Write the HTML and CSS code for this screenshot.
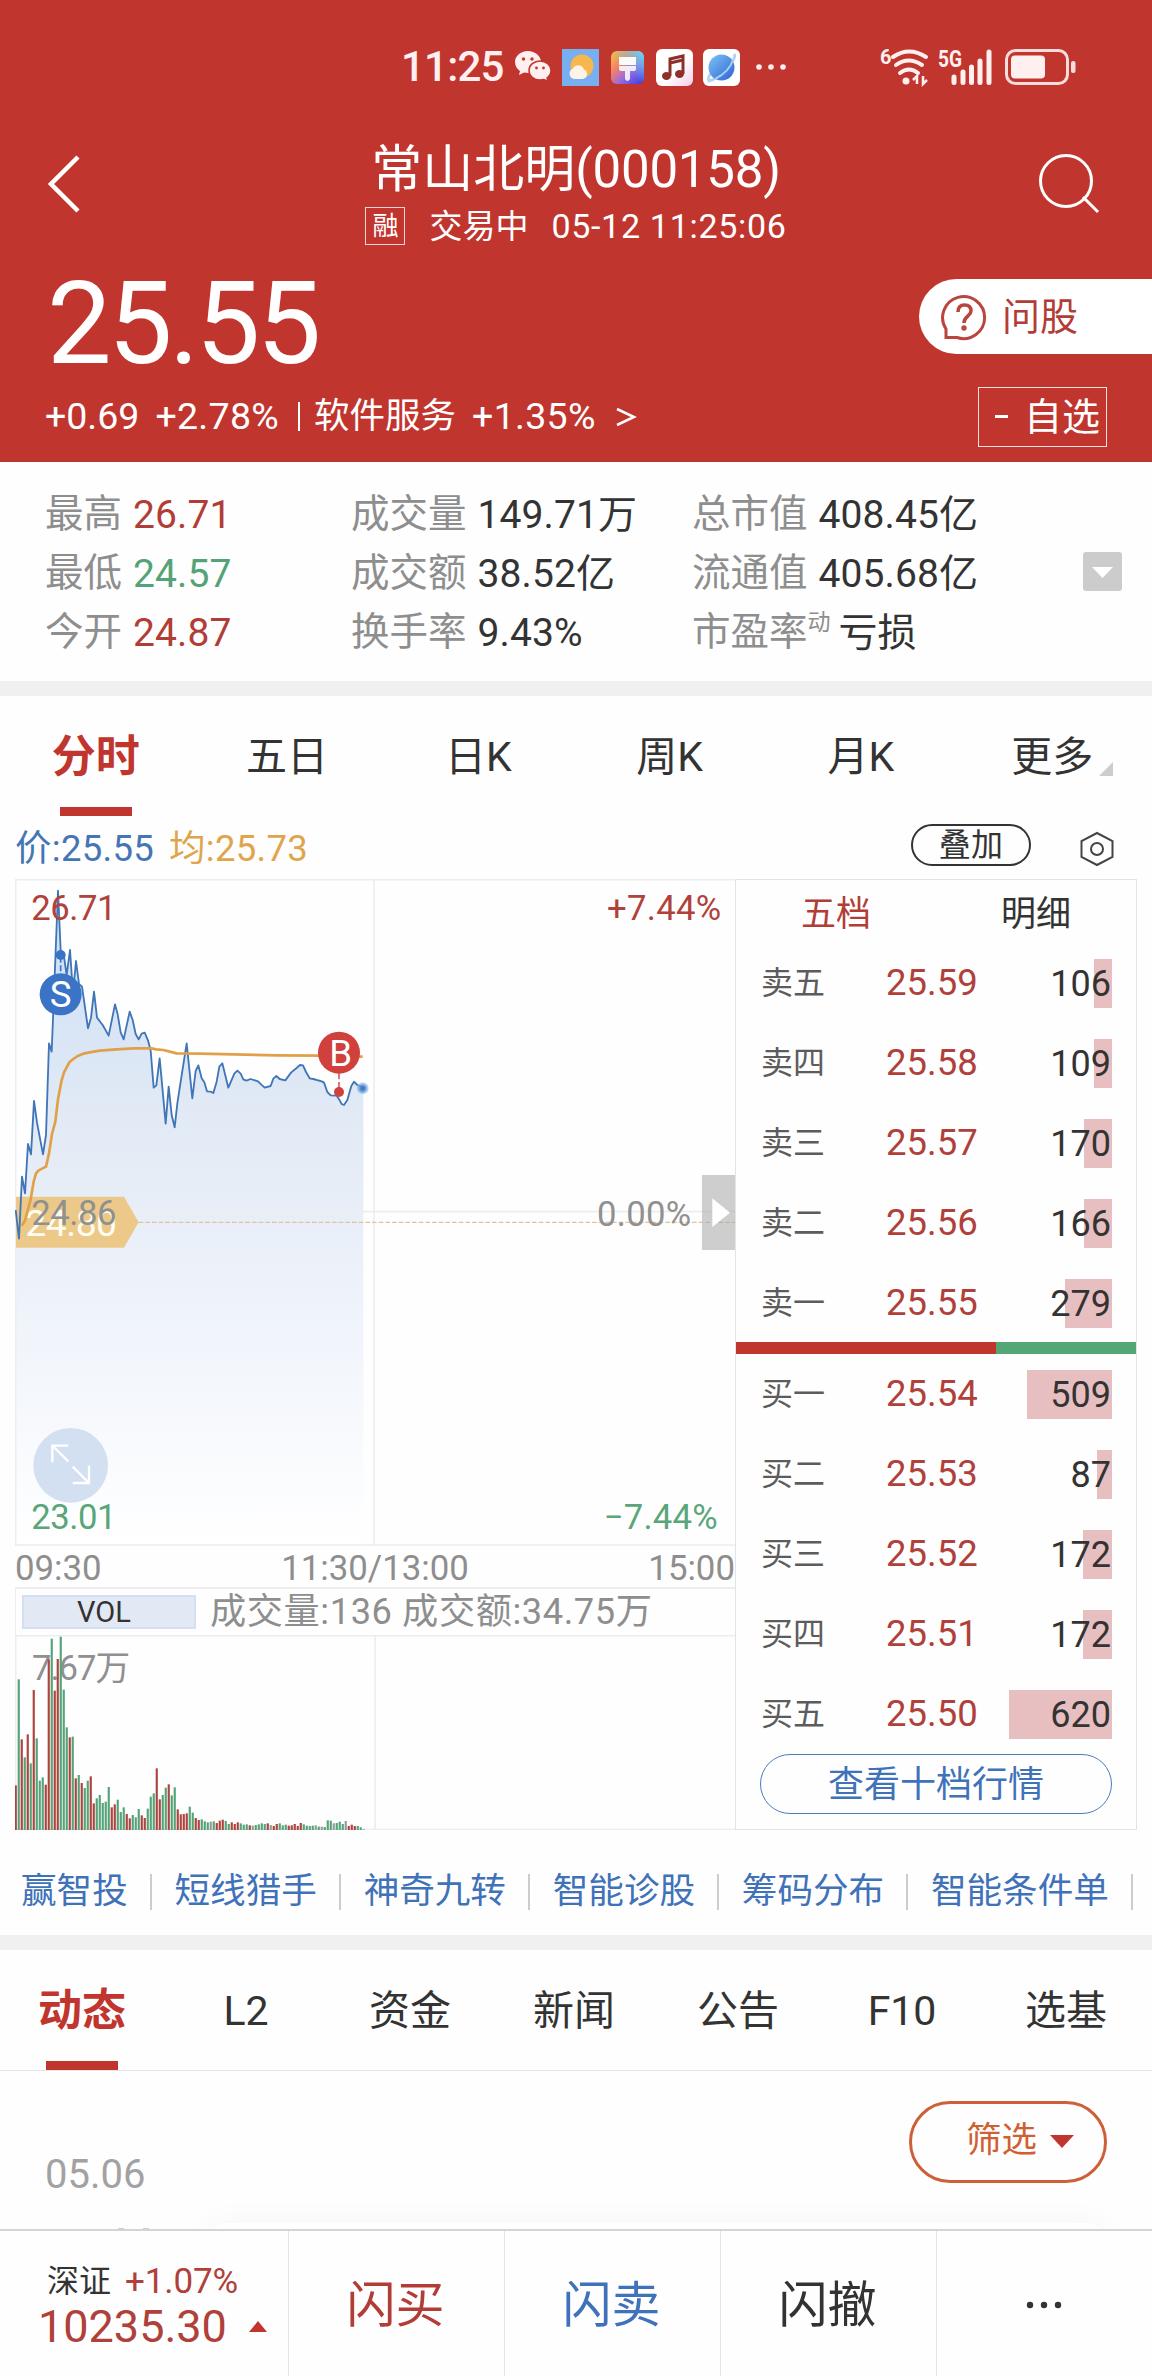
FILE: index.html
```html
<!DOCTYPE html>
<html lang="zh-CN">
<head>
    <meta charset="UTF-8">
    <meta name="viewport" content="width=device-width, initial-scale=1.0">
    <title>常山北明(000158)</title>
    <link rel="stylesheet" href="styles.css">
</head>
<body>
    <header class="header">
        <!-- Status bar -->
        <div class="status-bar">
            <span class="clock">11:25</span>
            <svg class="ic-wechat" width="36" height="32" viewBox="0 0 36 32">
                <path fill="#fff0ef" d="M13 0C5.500 0 0 5 0 11c0 4 2 7 5 9l-1 4 5-2.500 4 .5c7 0 13-5 13-11S20 0 13 0z"/>
                <path fill="#fff0ef" stroke="#c0362f" stroke-width="1.500" d="M25 10c-6 0-11 4-11 9.500S19 29 25 29l4-.5 4 2-1-3.500c2.500-2 4-4.500 4-7.500C36 14 31 10 25 10z"/>
                <g fill="#c0362f"><circle cx="8.500" cy="8" r="1.700"/><circle cx="17" cy="8" r="1.700"/><circle cx="21.500" cy="17" r="1.400"/><circle cx="28.500" cy="17" r="1.400"/></g>
            </svg>
            <svg class="ic-app" width="37" height="37" viewBox="0 0 37 37">
                <rect width="37" height="37" fill="#78aff0"/>
                <circle cx="20" cy="17" r="11.500" fill="#f7b64e"/>
                <path fill="#fdf3e7" d="M12 30a5.500 5.500 0 0 1-1-10.500 6 6 0 0 1 11 1A5 5 0 0 1 21 30z"/>
            </svg>
            <svg class="ic-theme" width="33" height="33" viewBox="0 0 33 33">
                <defs>
                    <linearGradient id="theme" x1="0" y1="0" x2="1" y2="1">
                        <stop offset="0" stop-color="#f5c83c"/><stop offset=".35" stop-color="#f0806a"/><stop offset=".6" stop-color="#9a6be0"/><stop offset="1" stop-color="#3038e8"/>
                    </linearGradient>
                    <linearGradient id="themeTop" x1="0" y1="1" x2="1" y2="0">
                        <stop offset=".45" stop-color="#60d0f0" stop-opacity="0"/><stop offset="1" stop-color="#60e0f0"/>
                    </linearGradient>
                </defs>
                <rect width="33" height="33" rx="6" fill="url(#theme)"/>
                <rect width="33" height="33" rx="6" fill="url(#themeTop)"/>
                <path fill="#fff" d="M8 6h17v8H8z" opacity=".95"/>
                <path fill="#fff" d="M8 15h17v3q0 2-3 2h-3v8q-2.500 4-5 0v-8h-3q-3 0-3-2z" opacity=".85"/>
            </svg>
            <svg class="ic-app" width="37" height="37" viewBox="0 0 37 37">
                <defs><linearGradient id="music" x1="0" y1="0" x2="1" y2="1"><stop offset=".55" stop-color="#fff"/><stop offset="1" stop-color="#f3cfe8"/></linearGradient></defs>
                <rect width="37" height="37" rx="6" fill="url(#music)"/>
                <path fill="none" stroke="#8f2f2a" stroke-width="3" d="M14 27V10l13-3v18M14 14l13-3"/>
                <ellipse cx="10.500" cy="27" rx="4.500" ry="4" fill="#8f2f2a"/><ellipse cx="23.500" cy="25" rx="4.500" ry="4" fill="#8f2f2a"/>
            </svg>
            <svg class="ic-planet" width="37" height="37" viewBox="0 0 37 37">
                <defs><linearGradient id="planet" x1="0" y1="0" x2="1" y2="1"><stop offset="0" stop-color="#7cc4f8"/><stop offset="1" stop-color="#2f62d0"/></linearGradient></defs>
                <rect width="37" height="37" rx="6" fill="#fff"/>
                <path d="M31 5q3 3-7 14T6 32q-2-2 2-8" fill="none" stroke="#b5d3f5" stroke-width="3"/>
                <circle cx="18.500" cy="18.500" r="13" fill="url(#planet)"/>
                <path d="M30 11q-4 12-18 19" fill="none" stroke="#a9cdf8" stroke-width="2"/>
            </svg>
            <svg class="ic-dots" width="30" height="6" viewBox="0 0 30 6" fill="#fff0ef"><circle cx="3" cy="3" r="2.800"/><circle cx="15" cy="3" r="2.800"/><circle cx="27" cy="3" r="2.800"/></svg>
            <svg class="ic-signal" width="198" height="50" viewBox="879 41 198 50">
                <g fill="none" stroke="#fff0ef" stroke-width="4" stroke-linecap="round">
                    <path d="M893 56q16-11 33 0M896 64q12.500-9 26 0M900 72q9-7 18 0"/>
                </g>
                <circle cx="906" cy="80" r="3.500" fill="#fff0ef"/>
                <path fill="none" stroke="#fff0ef" stroke-width="2.500" d="M917 83V75l-4 4M923 75v8l4-4"/>
                <g class="signal-text"><text x="880" y="63" font-size="20">6</text><text x="938" y="66" font-size="23" textLength="24" lengthAdjust="spacingAndGlyphs">5G</text></g>
                <g stroke="#fff0ef" stroke-width="5" stroke-linecap="round"><path d="M954 76v5.500M963 71v10.500M971.500 66v15.500M980 60v21.500M989 51v30.500"/></g>
                <rect x="1006.500" y="49.500" width="61" height="33" rx="9" fill="none" stroke="#f6dcda" stroke-width="3"/>
                <rect x="1011" y="54.500" width="34" height="23" rx="4" fill="#fff0ef"/>
                <rect x="1071" y="60" width="4.500" height="12" rx="2" fill="#f6dcda"/>
            </svg>
        </div>

        <!-- Stock title -->
        <div class="title-bar">
            <svg class="ic-back" width="34" height="58" viewBox="0 0 34 58"><path d="M32 2L5 29l27 27" fill="none" stroke="#fff" stroke-width="4.500"/></svg>
            <div class="title">
                <h1>常山北明<span>(000158)</span></h1>
                <p class="session"><span class="margin-badge">融</span><span class="session-state">交易中</span><span class="session-time">05-12 11:25:06</span></p>
            </div>
            <svg class="ic-search" width="62" height="62" viewBox="0 0 62 62" fill="none" stroke="#fff" stroke-width="3"><circle cx="28" cy="28" r="25.500"/><path d="M45 44l15 15"/></svg>
        </div>

        <div class="price-row">
            <strong class="price">25.55</strong>
            <div class="ask">
                <svg width="48" height="48" viewBox="0 0 48 48" fill="none" stroke="#b9453f" stroke-width="3">
                    <path d="M6 43.500V36a21 21 0 1 1 11 8.500H6z"/>
                    <path d="M18 19q0-7 6.500-7t6.500 6c0 5-7 5-7 12" stroke-width="3.500"/>
                    <circle cx="24" cy="35" r="1.200"/>
                </svg>
                <span>问股</span>
            </div>
        </div>

        <div class="change-row">
            <span class="chg-value">+0.69</span>
            <span class="chg-rate">+2.78%</span>
            <i class="chg-sep"></i>
            <span class="chg-sector">软件服务</span>
            <span class="chg-rate">+1.35%</span>
            <svg class="chg-arrow" width="22" height="22" viewBox="0 0 22 22" fill="none" stroke="#fff" stroke-width="2.500"><path d="M2 3l17 8-17 8"/></svg>
            <span class="fav"><i></i>自选</span>
        </div>
    </header>

    <!-- Key figures -->
    <section class="stats">
        <div class="stat"><label>最高</label><b class="up">26.71</b></div>
        <div class="stat"><label>成交量</label><b>149.71万</b></div>
        <div class="stat"><label>总市值</label><b>408.45亿</b></div>
        <div class="stat"><label>最低</label><b class="down">24.57</b></div>
        <div class="stat"><label>成交额</label><b>38.52亿</b></div>
        <div class="stat"><label>流通值</label><b>405.68亿</b></div>
        <div class="stat"><label>今开</label><b class="up">24.87</b></div>
        <div class="stat"><label>换手率</label><b>9.43%</b></div>
        <div class="stat"><label>市盈率<sup>动</sup></label><b class="loss">亏损</b></div>
        <svg class="stats-toggle" width="39" height="39" viewBox="0 0 39 39"><rect width="39" height="39" rx="3" fill="#ccc"/><path d="M9 15h21L19.500 26z" fill="#fff"/></svg>
    </section>

    <!-- Chart period tabs -->
    <nav class="tabs period-tabs">
        <a class="active">分时</a>
        <a>五日</a>
        <a>日K</a>
        <a>周K</a>
        <a>月K</a>
        <a>更多<i class="corner"></i></a>
    </nav>

    <div class="legend">
        <span class="legend-price">价:25.55</span>
        <span class="legend-avg">均:25.73</span>
        <span class="overlay-btn">叠加</span>
        <svg width="34" height="36" viewBox="0 0 34 36" fill="none" stroke="#444" stroke-width="2"><path d="M17 2l15.500 8v16L17 34 1.500 26V10z"/><circle cx="17" cy="18" r="6"/></svg>
    </div>

    <main class="quote">
        <div class="charts">
            <!-- Minute chart -->
            <svg class="minute-chart" width="720" height="667" viewBox="45 57 2160 2001">
                <defs>
                    <linearGradient id="area" gradientUnits="userSpaceOnUse" x1="0" y1="100" x2="0" y2="2050">
                        <stop offset="0" stop-color="#cbdff7"/>
                        <stop offset=".35" stop-color="#e2eaf5"/>
                        <stop offset=".6" stop-color="#edf2fa"/>
                        <stop offset="1" stop-color="#fff"/>
                    </linearGradient>
                    <radialGradient id="pulse"><stop offset="0" stop-color="#3a74c4"/><stop offset=".35" stop-color="#4a84cc"/><stop offset="1" stop-color="#9cc4ec" stop-opacity=".5"/></radialGradient>
                </defs>
                <path id="areaPath" fill="url(#area)"/>
                <g fill="none" stroke="#ededed" stroke-width="5">
                    <path d="M1122 57v2001M45 1055h2160M45 59h2160M45 2055h2160M47 57v2001"/>
                </g>
                <path d="M416 1087h1789" stroke="#e2c19c" stroke-width="4" stroke-dasharray="14 6"/>
                <path d="M48 1010h324l44 77-44 76H48z" fill="#ecc988"/>
                <text class="chart-text tag-text" x="76" y="1127">24.80</text>
                <path id="pricePath" fill="none" stroke="#4076b8" stroke-width="5.500" stroke-linejoin="round"/>
                <path fill="none" stroke="#e0a04a" stroke-width="8" stroke-linejoin="round" d="M65 1097L75 1082 92 1018 101 965 108 940 116 931 138 920 147 880 156 822 166 785 174 718 184 665 192 637 200 622 208 607 220 597 235 587 250 581 268 577 300 572 350 568 400 565 455 565 468 568 490 570 530 580 600 581 700 583 830 586 960 587 1088 590"/>
                <text class="chart-text up-text" x="94" y="180">26.71</text>
                <text class="chart-text up-text end" x="2164" y="180">+7.44%</text>
                <text class="chart-text mute-text" x="94" y="1094">24.86</text>
                <text class="chart-text mute-text end" x="2074" y="1097">0.00%</text>
                <text class="chart-text down-text" x="94" y="2006">23.01</text>
                <text class="chart-text down-text end" x="2154" y="2006">−7.44%</text>

                <!-- Sell and buy marks -->
                <path d="M182 290v60" stroke="#3f75c2" stroke-width="5" stroke-dasharray="18 8"/>
                <circle cx="182" cy="285" r="15" fill="#3b73c4"/>
                <circle cx="182" cy="403" r="63" fill="#3b74c7"/>
                <text class="mark" x="182" y="442">S</text>
                <path d="M1017 640v50" stroke="#d0606a" stroke-width="5" stroke-dasharray="18 8"/>
                <circle cx="1017" cy="696" r="15" fill="#d0413d"/>
                <circle cx="1017" cy="578" r="63" fill="#d0413d"/>
                <text class="mark" x="1022" y="617">B</text>
                <circle cx="1088" cy="685" r="18" fill="url(#pulse)"/>

                <path d="M2106 945h99v225h-99z" fill="#aaa" fill-opacity=".58"/>
                <path d="M2137 1015l53 43-53 43z" fill="#fff"/>

                <circle cx="212" cy="1816" r="112" fill="#d2e0f1"/>
                <path d="M205 1757h-48v50M158 1758l47 46M267 1817v52h-49M265 1867l-47-47" fill="none" stroke="#fff" stroke-width="7"/>
            </svg>
            <div class="time-axis"><span>09:30</span><span>11:30/13:00</span><span>15:00</span></div>
            <div class="volume-head">
                <span class="vol-btn">VOL</span>
                <span>成交量:136 成交额:34.75万</span>
            </div>
            <svg class="volume-chart" width="720" height="195" viewBox="45 102 2160 585">
                <path d="M45 104h2160M47 102v585M1125 102v585M45 686h2160" fill="none" stroke="#ededed" stroke-width="5"/>
                <text class="chart-text mute-text vol-max" x="96" y="238">7.67万</text>
                <g id="volumeBars"></g>
            </svg>
        </div>

        <!-- Order book -->
        <aside class="book">
            <div class="book-tabs"><a class="up">五档</a><a>明细</a></div>
            <div id="asks"></div>
            <div class="ratio"><i class="ratio-sell"></i><i class="ratio-buy"></i></div>
            <div id="bids" class="bids"></div>
            <a class="book-more">查看十档行情</a>
        </aside>
    </main>

    <nav class="tools">
        <a>赢智投</a>
        <a>短线猎手</a>
        <a>神奇九转</a>
        <a>智能诊股</a>
        <a>筹码分布</a>
        <a>智能条件单</a>
    </nav>

    <nav class="tabs info-tabs">
        <a class="active">动态</a>
        <a>L2</a>
        <a>资金</a>
        <a>新闻</a>
        <a>公告</a>
        <a>F10</a>
        <a>选基</a>
    </nav>

    <section class="feed">
        <time>05.06</time>
        <span class="filter">筛选<svg width="24" height="13" viewBox="0 0 24 13"><path d="M0 0h24L12 13z" fill="#c0362f"/></svg></span>
        <div class="feed-card"></div>
        <i class="feed-mark"></i>
    </section>

    <footer class="trade-bar">
        <div class="index">
            <p><span>深证</span><em>+1.07%</em></p>
            <p class="index-value">10235.30<svg width="18" height="11" viewBox="0 0 18 11"><path d="M0 11h18L9 0z" fill="#c0362f"/></svg></p>
        </div>
        <a class="buy">闪买</a>
        <a class="sell">闪卖</a>
        <a>闪撤</a>
        <a><svg width="36" height="8" viewBox="0 0 36 8" fill="#333"><circle cx="4" cy="4" r="3.200"/><circle cx="18" cy="4" r="3.200"/><circle cx="32" cy="4" r="3.200"/></svg></a>
    </footer>

    <script>
        const prices = '47,1050 57,1136 66,950 75,1000 84,852 93,883 102,723 111,788 129,883 138,825 147,550 155,575 164,350 174,92 182,270 192,290 200,345 210,270 219,400 228,303 237,372 246,380 264,505 273,473 282,395 291,473 308,495 326,527 345,433 353,463 362,517 371,538 389,455 398,480 407,522 416,538 425,521 434,518 444,541 452,572 461,683 469,676 479,595 497,791 506,680 515,765 524,802 532,730 542,665 560,550 577,715 587,633 595,616 605,655 613,667 621,694 632,695 640,699 650,665 658,620 667,610 685,683 703,641 712,632 722,641 730,658 739,662 752,657 774,664 784,674 794,683 812,678 820,656 829,648 839,657 856,661 873,638 890,624 900,615 909,616 918,636 929,655 940,657 965,664 972,668 982,696 992,706 1010,707 1018,719 1025,732 1032,735 1042,720 1054,678 1062,665 1072,675 1090,683';
        document.getElementById('pricePath').setAttribute('d', 'M' + prices);
        document.getElementById('areaPath').setAttribute('d', 'M' + prices + ' 1090,2055 47,2055z');

        // Height and direction of every minute's volume
        const volumes = '134r 452g 272r 218g 287r 200g 420r 275g 148g 158g 136r 512r 574g 418r 513r 580g 421g 308g 278r 280g 155r 165g 141r 126g 148g 161r 80r 95g 105g 81g 85g 129g 68r 77r 91g 54g 68g 48r 35r 45g 38g 63g 44r 36r 64g 100g 110g 185r 92r 105g 127g 137r 104g 128g 62r 47r 48r 50r 70g 52g 36r 30r 32g 26g 23g 25n 26g 21r 28r 31r 27g 18g 23r 18r 23r 20g 16g 17g 14r 13n 15g 17g 20g 18g 20r 15n 12r 18r 20g 14g 16g 13r 14r 18r 12r 21r 17g 13g 12g 13g 14n 10g 10n 9g 29g 28g 20n 21g 25g 18g 27n 12r 16r 12r 12g 8g 2g';
        const volumeColors = { r: '#ad453f', g: '#56a37a', n: '#999' };
        document.getElementById('volumeBars').innerHTML = volumes.split(' ').map((item, i) => {
            const height = parseInt(item);
            return `<rect x="${44 + i * 9}" y="${687 - height}" width="6.500" height="${height}" fill="${volumeColors[item.slice(-1)]}"/>`;
        }).join('');

        const asks = [['卖五', '25.59', 106], ['卖四', '25.58', 109], ['卖三', '25.57', 170], ['卖二', '25.56', 166], ['卖一', '25.55', 279]];
        const bids = [['买一', '25.54', 509], ['买二', '25.53', 87], ['买三', '25.52', 172], ['买四', '25.51', 172], ['买五', '25.50', 620]];

        function renderLevels(id, levels) {
            document.getElementById(id).innerHTML = levels.map(([label, price, amount]) => `
                <div class="level">
                    <span class="level-name">${label}</span>
                    <span class="level-price">${price}</span>
                    <span class="level-amount"><i style="width: ${Math.round(amount / 6)}px"></i><b>${amount}</b></span>
                </div>
            `).join('');
        }

        renderLevels('asks', asks);
        renderLevels('bids', bids);
    </script>
</body>
</html>
```
FILE: styles.css
```css
/* General reset */
* {
    margin: 0;
    padding: 0;
    box-sizing: border-box;
}

body {
    width: 1152px;
    height: 2376px;
    overflow: hidden;
    font-family: Roboto, "Noto Sans CJK SC", sans-serif;
    font-size: 36px;
    line-height: 1;
    color: #333;
    background-color: #fefefe;
    white-space: nowrap;
}

svg {
    display: block;
    flex: none;
}

i, em, b {
    font-style: normal;
    font-weight: 400;
}

.up {
    color: #b23d37;
}

.down {
    color: #54a277;
}

/* Header */
.header {
    height: 462px;
    background-color: #c0362f;
    color: #fff;
}

.status-bar {
    display: flex;
    align-items: center;
    height: 134px;
    padding-left: 401px;
}

.clock {
    width: 114px;
    font-size: 42px;
    font-weight: 500;
    letter-spacing: -0.8px;
    color: #fff0ef;
}

.ic-app {
    margin-left: 11px;
}

.ic-theme {
    margin-left: 12px;
    margin-right: 1px;
}

.ic-planet {
    margin-left: 10px;
}

.ic-dots {
    margin-left: 16px;
}

.ic-signal {
    margin-left: 93px;
}

.signal-text {
    fill: #fff0ef;
    font-weight: 700;
}

.title-bar {
    display: flex;
    align-items: flex-start;
    justify-content: space-between;
    height: 128px;
    padding: 0 52px 0 46px;
}

.ic-back {
    margin-top: 21px;
}

.ic-search {
    margin-top: 19px;
}

.title {
    padding-left: 34px;
}

.title h1 {
    height: 68px;
    font-size: 51px;
    font-weight: 400;
    line-height: 71px;
    text-align: center;
}

.title h1 span {
    letter-spacing: -0.2px;
}

.session {
    display: flex;
    align-items: center;
    justify-content: center;
    height: 48px;
}

.margin-badge {
    width: 40px;
    height: 38px;
    border: 1px solid #f3d3d1;
    font-size: 26px;
    line-height: 36px;
    text-align: center;
}

.session-state {
    margin-left: 24px;
    font-size: 33px;
}

.session-time {
    margin-left: 23px;
    font-size: 34px;
    letter-spacing: 0.7px;
}

.price-row {
    display: flex;
    justify-content: space-between;
    height: 108px;
}

.price {
    padding-left: 47px;
    font-size: 115px;
    font-weight: 400;
    line-height: 124px;
    letter-spacing: -3.600px;
}

.ask {
    display: flex;
    align-items: center;
    width: 233px;
    height: 75px;
    margin-top: 17px;
    padding-left: 21px;
    border-radius: 38px 0 0 38px;
    background-color: #fff;
    color: #b23d37;
    font-size: 38px;
}

.ask span {
    margin-left: 14px;
}

.change-row {
    display: flex;
    align-items: center;
    height: 92px;
    padding: 1px 45px 0;
    font-size: 37.500px;
}

.chg-rate {
    margin-left: 16px;
    letter-spacing: 0.3px;
}

.chg-sep {
    width: 2px;
    height: 29px;
    margin: 0 14px 0 19px;
    background-color: #fff;
}

.chg-sector {
    font-size: 35.500px;
}

.chg-arrow {
    margin-left: 19px;
}

.fav {
    display: flex;
    align-items: center;
    justify-content: flex-end;
    width: 129px;
    height: 60px;
    margin-left: auto;
    padding-right: 6px;
    border: 1px solid #f8e2e0;
    font-size: 38px;
}

.fav i {
    width: 13px;
    height: 3px;
    margin-right: 16px;
    background-color: #fff;
}

/* Key figures */
.stats {
    position: relative;
    display: grid;
    grid-template-columns: 306px 341px 1fr;
    grid-auto-rows: 59px;
    height: 234px;
    padding: 23px 0 0 45px;
    border-bottom: 15px solid #f0f0f0;
    font-size: 39px;
}

.stat {
    display: flex;
    align-items: center;
}

.stat label {
    position: relative;
    font-size: 38.500px;
    color: #8e8e8e;
}

.stat b {
    margin-left: 11px;
    padding-top: 1px;
    letter-spacing: 0.1px;
}

.stat sup {
    font-size: 23px;
    line-height: 0;
    vertical-align: 15px;
}

.stat .loss {
    margin-left: 8px;
}

.stats-toggle {
    position: absolute;
    top: 90px;
    right: 30px;
}

/* Tabs */
.tabs {
    display: flex;
    padding-right: 4px;
}

.tabs a {
    flex: 1;
    display: flex;
    flex-direction: column;
    align-items: center;
    font-size: 41px;
    line-height: 122px;
    height: 120px;
}

.tabs .active {
    color: #c0362f;
    font-size: 44px;
    font-weight: 700;
}

.tabs .active::after {
    content: "";
    width: 72px;
    height: 9px;
    margin-top: -11px;
    background-color: #c0362f;
}

.period-tabs {
    height: 120px;
}

.period-tabs a {
    position: relative;
}

.corner {
    position: absolute;
    right: 35px;
    top: 66px;
    border-left: 14px solid transparent;
    border-bottom: 14px solid #ccc;
}

.legend {
    display: flex;
    align-items: center;
    height: 63px;
    padding: 3px 38px 0 15px;
    font-size: 36.500px;
    letter-spacing: 0.3px;
}

.legend-price {
    width: 154px;
    color: #4675b6;
}

.legend-avg {
    color: #e0a54c;
}

.overlay-btn {
    width: 120px;
    height: 42px;
    margin: -9px 49px 0 auto;
    border: 2px solid #333;
    border-radius: 21px;
    font-size: 32px;
    line-height: 39px;
    text-align: center;
}

/* Charts */
.quote {
    display: flex;
    height: 951px;
    padding-left: 15px;
}

.charts {
    width: 720px;
}

.chart-text {
    font-size: 104px;
    letter-spacing: -1.500px;
}

.chart-text.end {
    letter-spacing: 0.8px;
    text-anchor: end;
}

.chart-text.vol-max {
    letter-spacing: -3px;
}

.up-text {
    fill: #b0413b;
}

.down-text {
    fill: #5aa57a;
}

.mute-text {
    fill: #909090;
}

.chart-text.tag-text {
    fill: #fffdf0;
    font-size: 112px;
}

.mark {
    fill: #fff;
    font-size: 110px;
    text-anchor: middle;
}

.time-axis {
    display: flex;
    justify-content: space-between;
    align-items: center;
    height: 41px;
    padding-top: 4px;
    font-size: 34.800px;
    color: #8e8e8e;
}

.volume-head {
    display: flex;
    align-items: center;
    height: 48px;
    padding-left: 6px;
    border: solid #ededed;
    border-width: 2px 0 0 1px;
    font-size: 36.200px;
    color: #8e8e8e;
    letter-spacing: 0.6px;
}

.vol-btn {
    width: 174px;
    height: 34px;
    margin-right: 14px;
    border: 2px solid #d5dff4;
    background-color: #e3e8f5;
    color: #333;
    font-size: 29px;
    line-height: 31px;
    letter-spacing: 0;
    text-align: center;
    padding-right: 10px;
}

/* Order book */
.book {
    width: 402px;
    border: 1px solid #e3e3e3;
}

.book-tabs {
    display: flex;
    height: 63px;
    line-height: 69px;
    font-size: 35px;
    text-align: center;
}

.book-tabs a {
    flex: 1;
}

.level {
    display: flex;
    align-items: center;
    height: 80px;
    padding: 0 24px 0 25px;
}

.level-name {
    width: 125px;
    font-size: 32px;
    color: #5c5c5c;
}

.level-price {
    padding-top: 1px;
    font-size: 36.500px;
    color: #b0403a;
}

.level-amount {
    position: relative;
    flex: 1;
    height: 49px;
    line-height: 51px;
    text-align: right;
}

/* Bar that lies behind the amount */
.level-amount i {
    position: absolute;
    top: 0;
    right: 0;
    height: 49px;
    background-color: #e8bfc0;
}

.level-amount b {
    position: relative;
    padding-right: 1px;
}

.ratio {
    display: flex;
    height: 12px;
    margin-top: -1px;
}

.ratio-sell {
    width: 65%;
    background-color: #c0362f;
}

.ratio-buy {
    flex: 1;
    background-color: #52a775;
}

.book-more {
    display: block;
    width: 352px;
    height: 60px;
    margin: 0 0 0 24px;
    border: 1px solid #4b7cb8;
    border-radius: 30px;
    color: #3f72b8;
    line-height: 61px;
    text-align: center;
}

/* Tool links */
.tools {
    display: flex;
    align-items: center;
    height: 120px;
    padding: 18px 0 0 21px;
    border-bottom: 15px solid #f0f0f0;
    overflow: hidden;
    color: #3f72b8;
    font-size: 35.600px;
}

.tools a {
    display: flex;
    align-items: center;
    margin-right: 22.800px;
}

.tools a::after {
    content: "";
    width: 2px;
    height: 36px;
    margin-left: 22px;
    background-color: #ccc;
}

.info-tabs {
    height: 121px;
    border-bottom: 1px solid #e6e6e6;
}

/* Feed */
.feed {
    position: relative;
    display: flex;
    justify-content: space-between;
    height: 158px;
    padding: 30px 45px 0;
    overflow: hidden;
}

.feed time {
    margin-top: 54px;
    font-size: 40px;
    color: #a2a2a2;
}

.filter {
    display: flex;
    align-items: center;
    justify-content: flex-end;
    width: 198px;
    height: 82px;
    padding: 0 30px 2px 0;
    border: 3px solid #cd6038;
    border-radius: 41px;
    color: #d05f33;
    font-size: 35.500px;
}

.filter svg {
    margin-left: 13px;
}

.feed-card {
    position: absolute;
    left: 210px;
    top: 152px;
    width: 893px;
    height: 60px;
    border-radius: 16px;
    background-color: #fff;
    box-shadow: 0 0 32px rgba(0, 0, 0, 0.04);
}

.feed-mark {
    position: absolute;
    left: 118px;
    bottom: 0;
    width: 31px;
    height: 1px;
    border: solid #dfc5c8;
    border-width: 0 6px;
}

/* Trade bar */
.trade-bar {
    display: flex;
    height: 148px;
    border-top: 2px solid #d5d3d4;
}

.trade-bar a {
    flex: 1;
    display: flex;
    align-items: center;
    justify-content: center;
    padding-right: 2px;
    padding-top: 2px;
    border-left: 1px solid #e3e3e3;
    font-size: 49px;
}

.index {
    width: 288px;
    padding: 32px 0 0 47px;
    font-size: 32px;
}

.index p {
    display: flex;
    align-items: center;
    height: 36px;
}

.index em {
    margin-left: 14px;
    font-size: 35px;
    letter-spacing: -0.1px;
    color: #b0403a;
}

.index .index-value {
    height: 54px;
    margin-left: -9px;
    font-size: 45px;
    color: #b0403a;
}

.index-value svg {
    margin-left: 22px;
}

.trade-bar .buy {
    color: #b23d37;
}

.trade-bar .sell {
    color: #3f72b8;
}
```
